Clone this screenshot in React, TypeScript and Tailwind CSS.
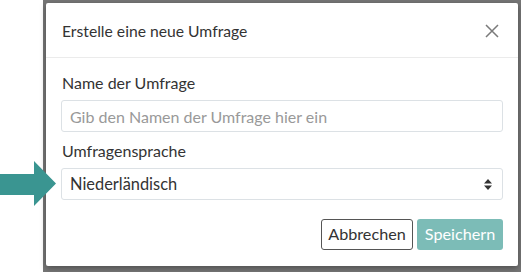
function CloseIcon() {
  return (
    <svg width="14" height="14" viewBox="0 0 14 14" className="text-[#7a7a7a]">
      <path d="M1 1L13 13M13 1L1 13" stroke="currentColor" strokeWidth="1.5" fill="none" />
    </svg>
  );
}

function SortArrows() {
  return (
    <svg width="8" height="11" viewBox="0 0 8 11" className="text-[#333]">
      <path d="M4 0L8 4.5H0Z M4 11L0 6.5H8Z" fill="currentColor" />
    </svg>
  );
}

export default function App() {
  return (
    <div className="relative flex w-[521px] h-[272px] bg-white font-['Lato',sans-serif] text-[#333]">
      <div className="w-[43px] shrink-0 bg-white" />
      <div className="flex-1 bg-[#767676] pt-[3px] pl-[3px] pr-[3px] pb-[6px]">
        <div className="flex flex-col h-full bg-white rounded-[2px] shadow-[0_2px_6px_rgba(0,0,0,0.35)]">
          {/* Header */}
          <div className="flex items-center justify-between h-[55px] pl-4 pr-[16px] border-b border-[#ebebeb]">
            <h4 className="text-[15.7px] leading-5 pt-[2px]">Erstelle eine neue Umfrage</h4>
            <button className="flex items-center justify-center w-5 h-5 mt-[2px]" aria-label="Schließen">
              <CloseIcon />
            </button>
          </div>

          {/* Body */}
          <div className="flex flex-col px-[15px] pt-[15px]">
            <label className="text-[16px] leading-5 pl-[1px] mb-[7px]">Name der Umfrage</label>
            <input
              className="h-[32px] px-[8px] border border-[#dce1e5] rounded-[3px] text-[16px] text-[#333] placeholder:text-[#999] outline-none"
              placeholder="Gib den Namen der Umfrage hier ein"
            />
            <label className="text-[16px] leading-5 pl-[1px] mt-[9px] mb-[7px]">Umfragensprache</label>
            <div className="flex items-center justify-between h-[32px] pl-[8px] pr-[10px] border border-[#dce1e5] rounded-[3px] text-[16.4px]">
              <span>Niederländisch</span>
              <SortArrows />
            </div>
          </div>

          {/* Footer */}
          <div className="flex justify-end gap-[4px] px-[15px] pt-[19px]">
            <button className="h-[31px] w-[92px] border border-[#555] rounded-[3px] bg-white text-[16.2px] text-[#333]">
              Abbrechen
            </button>
            <button className="h-[31px] w-[86px] rounded-[3px] bg-[#7cbcb7] text-[16.2px] text-white">
              Speichern
            </button>
          </div>
        </div>
      </div>

      {/* Pointer arrow */}
      <svg
        className="absolute left-0 top-[161px]"
        width="56"
        height="46"
        viewBox="0 0 56 46"
      >
        <path d="M0 13H34V0L56 22.5L34 45V34H0Z" fill="#3a9591" />
      </svg>
    </div>
  );
}
